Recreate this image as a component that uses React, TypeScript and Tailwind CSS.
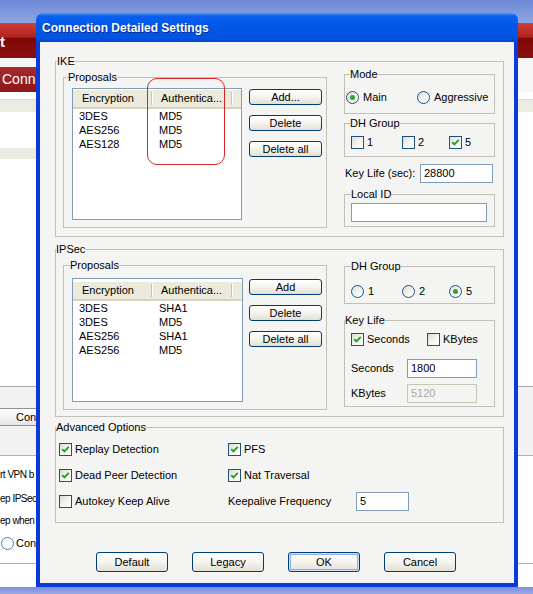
import React from 'react';

type Proposal = [string, string];

const ikeProposals: Proposal[] = [
  ['3DES', 'MD5'],
  ['AES256', 'MD5'],
  ['AES128', 'MD5'],
];

const ipsecProposals: Proposal[] = [
  ['3DES', 'SHA1'],
  ['3DES', 'MD5'],
  ['AES256', 'SHA1'],
  ['AES256', 'MD5'],
];

const CheckBox = ({ checked = false }: { checked?: boolean }) => (
  <span className="flex h-[13px] w-[13px] shrink-0 items-center justify-center border border-[#1c5180] bg-linear-to-br from-[#dcdcd5] via-[#f3f3ef] to-white">
    {checked && (
      <svg width="9" height="9" viewBox="0 0 9 9">
        <path d="M1.2 4.2 3.4 6.5 7.8 1.9" fill="none" stroke="#21a121" strokeWidth="1.9" />
      </svg>
    )}
  </span>
);

const Radio = ({ selected = false }: { selected?: boolean }) => (
  <span className="flex h-[13px] w-[13px] shrink-0 items-center justify-center rounded-full border border-[#1c5180] bg-linear-to-br from-[#dcdcd5] via-[#f3f3ef] to-white">
    {selected && <span className="h-[5px] w-[5px] rounded-full bg-[#2aa82a]" />}
  </span>
);

interface GroupBoxProps {
  label: string;
  labelClass: string;
  className: string;
  children?: React.ReactNode;
}

// XP style group box: the caption sits on the top border line
const GroupBox = ({ label, labelClass, className, children }: GroupBoxProps) => (
  <fieldset className={`border border-[#c0c0b8] ${className}`}>
    <legend className={`text-[11px] leading-[13px] ${labelClass}`}>{label}</legend>
    {children}
  </fieldset>
);

const HeaderDivider = () => (
  <span className="h-[13px] w-[2px] shrink-0 border-x border-l-[#c7c5b2] border-r-white" />
);

const ListView = ({ rows, className, pad }: { rows: Proposal[]; className: string; pad: string }) => (
  <div className={`flex flex-col border border-[#7f9db9] bg-white ${pad} ${className}`}>
    <div className="flex h-[19px] shrink-0 items-center border-b-2 border-[#d6d3c4] bg-[#ebeadb]">
      <span className="w-[78px] pl-[9px]">Encryption</span>
      <HeaderDivider />
      <span className="w-[78px] pl-[8px]">Authentica...</span>
      <HeaderDivider />
    </div>
    {rows.map(([enc, auth], i) => (
      <div key={i} className="flex h-[14px] items-center">
        <span className="w-[80px] pl-[6px]">{enc}</span>
        <span className="pl-[6px]">{auth}</span>
      </div>
    ))}
  </div>
);

interface XpButtonProps {
  label: string;
  className: string;
  isDefault?: boolean;
}

const XpButton = ({ label, className, isDefault = false }: XpButtonProps) => (
  <div
    className={`flex items-center justify-center rounded-[3px] border border-[#003c74] bg-linear-to-b from-white via-[#f5f4ee] to-[#e2dfd5] text-[11px] leading-none ${
      isDefault ? 'shadow-[inset_0_0_0_1px_#cfe0fb,inset_0_0_0_2px_#8aaef0]' : ''
    } ${className}`}
  >
    {label}
  </div>
);

const TextBox = ({ value = '', className, disabled = false }: { value?: string; className: string; disabled?: boolean }) => (
  <div
    className={`flex h-[19px] shrink-0 items-center border pl-[3px] text-[11px] ${
      disabled ? 'border-[#c9c7ba] bg-[#f4f4f2] text-[#aca899]' : 'border-[#7f9db9] bg-white'
    } ${className}`}
  >
    {value}
  </div>
);

const Option = ({ children, className = '' }: { children: React.ReactNode; className?: string }) => (
  <span className={`flex items-center gap-[3px] ${className}`}>{children}</span>
);

// the main client window sitting behind the dialog; only its edges show
const BackgroundApp = () => (
  <div className="flex h-full flex-col text-[11px]">
    <div className="h-[23px] bg-linear-to-b from-[#6d89d6] to-[#8ea5e2]" />
    <div className="flex h-[35px] items-center bg-[linear-gradient(to_bottom,#cf4038_0%,#b1231e_40%,#7e0808_43%,#8a0f0f_100%)] text-[15px] font-bold leading-none text-white">
      <span className="pt-[2px]">t</span>
    </div>
    <div className="h-[9px] bg-[#f6f6f6]" />
    <div className="flex h-[25px] bg-[#f6f6f6]">
      <div className="flex h-full w-[36px] items-center whitespace-nowrap bg-linear-to-b from-[#a92a2a] to-[#8c1515] pl-[2px] text-[14px] text-white">
        Conn
      </div>
    </div>
    <div className="h-[8px] border-b border-[#d8d8d8] bg-white" />
    <div className="h-[12px] bg-[#ecebe2]" />
    <div className="h-[36px] bg-white" />
    <div className="h-[11px] w-[36px] bg-[#ecebe2]" />
    <div className="h-[227px] bg-white" />
    <div className="h-px bg-[#a8a8a8]" />
    <div className="h-[68px] bg-[#f2f2f2] pt-[21px]">
      <div className="flex h-[18px] w-[36px] items-center whitespace-nowrap border-y border-[#8e8f8f] bg-linear-to-b from-white to-[#e6e6e6] pl-[16px] text-[11px]">
        Con
      </div>
    </div>
    <div className="h-px bg-[#b4b4b4]" />
    <div className="flex h-[107px] w-[36px] flex-col whitespace-nowrap bg-white pt-[12px] text-[10px] tracking-[-0.5px]">
      <span className="h-[14px] leading-[14px]">rt VPN b</span>
      <span className="mt-[10px] h-[14px] leading-[14px]">ep IPSec</span>
      <span className="mt-[8px] h-[14px] leading-[14px]">ep when</span>
      <span className="mt-[8px] flex h-[14px] items-center gap-[2px] pl-px text-[11px] tracking-normal">
        <span className="h-[13px] w-[13px] shrink-0 rounded-full border border-[#5a7da8] bg-white" />
        Con
      </span>
    </div>
    <div className="h-px bg-[#b4b4b4]" />
    <div className="h-[23px] bg-white" />
    <div className="h-[7px] bg-linear-to-b from-[#7d8fdc] to-[#99a8e6]" />
  </div>
);

export default function App() {
  return (
    <div className="relative h-[594px] w-[533px] overflow-hidden bg-white font-['Liberation_Sans',Arial,sans-serif] text-black">
      <BackgroundApp />

      {/* Dialog window */}
      <div className="absolute left-[36px] top-[13px] flex w-[482px] flex-col">
        <div className="flex h-[29px] items-center rounded-t-[7px] bg-[linear-gradient(to_bottom,#4a98ff_0%,#0a61ef_10%,#0057e8_45%,#0254e2_85%,#0249cf_100%)] pl-[6px] pt-px">
          <span className="text-[12px] font-bold text-white [text-shadow:1px_1px_0_#0b2a8a]">
            Connection Detailed Settings
          </span>
        </div>

        <div className="h-[545px] border-x-4 border-b-4 border-[#0a3ad8]">
          <div className="h-full bg-[#f4f4f2] pl-[15px] pt-[13px] text-[11px]">
            {/* IKE */}
            <GroupBox label="IKE" labelClass="ml-[1px]" className="h-[182px] w-[449px]">
              <div className="flex items-start">
                <GroupBox label="Proposals" labelClass="ml-[4px]" className="ml-[7px] mt-[3px] h-[157px] w-[264px]">
                  <div className="flex items-start">
                    <ListView rows={ikeProposals} pad="pt-px" className="ml-[8px] mt-[4px] h-[132px] w-[170px]" />
                    <div className="ml-[7px] mt-[5px] flex w-[73px] flex-col gap-[10px]">
                      <XpButton label="Add..." className="h-[16px]" />
                      <XpButton label="Delete" className="h-[16px]" />
                      <XpButton label="Delete all" className="h-[16px]" />
                    </div>
                  </div>
                </GroupBox>

                <div className="ml-[17px] flex w-[151px] flex-col">
                  <GroupBox label="Mode" labelClass="ml-[5px]" className="h-[46px] w-[151px]">
                    <div className="ml-[1px] mt-[8px] flex items-center">
                      <span className="flex w-[71px] items-center gap-[4px]">
                        <Radio selected />
                        Main
                      </span>
                      <span className="flex items-center gap-[4px]">
                        <Radio />
                        Aggressive
                      </span>
                    </div>
                  </GroupBox>

                  <GroupBox label="DH Group" labelClass="ml-[5px]" className="mt-[3px] h-[40px] w-[151px]">
                    <div className="ml-[6px] mt-[4px] flex items-center">
                      <Option className="w-[51px]">
                        <CheckBox />1
                      </Option>
                      <Option className="w-[47px]">
                        <CheckBox />2
                      </Option>
                      <Option>
                        <CheckBox checked />5
                      </Option>
                    </div>
                  </GroupBox>

                  <div className="mt-[7px] flex h-[19px] items-center">
                    <span className="pl-[1px]">Key Life (sec):</span>
                    <TextBox value="28800" className="ml-auto mr-[2px] w-[73px]" />
                  </div>

                  <GroupBox label="Local ID" labelClass="ml-[6px]" className="mt-[5px] h-[39px] w-[151px]">
                    <TextBox className="ml-[6px] mt-[2px] w-[136px]" />
                  </GroupBox>
                </div>
              </div>
            </GroupBox>

            {/* IPSec */}
            <GroupBox label="IPSec" labelClass="ml-0" className="mt-[6px] h-[174px] w-[449px]">
              <div className="flex items-start">
                <GroupBox label="Proposals" labelClass="ml-[6px]" className="ml-[7px] mt-[3px] h-[151px] w-[264px]">
                  <div className="flex items-start">
                    <ListView rows={ipsecProposals} pad="pt-[3px]" className="ml-[8px] mt-[6px] h-[124px] w-[171px]" />
                    <div className="ml-[6px] mt-[7px] flex w-[73px] flex-col gap-[10px]">
                      <XpButton label="Add" className="h-[16px]" />
                      <XpButton label="Delete" className="h-[16px]" />
                      <XpButton label="Delete all" className="h-[16px]" />
                    </div>
                  </div>
                </GroupBox>

                <div className="ml-[17px] flex w-[151px] flex-col">
                  <GroupBox label="DH Group" labelClass="ml-[6px]" className="mt-[4px] h-[44px] w-[151px]">
                    <div className="ml-[6px] mt-[10px] flex items-center">
                      <span className="flex w-[51px] items-center gap-[4px]">
                        <Radio />1
                      </span>
                      <span className="flex w-[47px] items-center gap-[4px]">
                        <Radio />2
                      </span>
                      <span className="flex items-center gap-[4px]">
                        <Radio selected />5
                      </span>
                    </div>
                  </GroupBox>

                  <GroupBox label="Key Life" labelClass="ml-0" className="mt-[10px] h-[93px] w-[151px]">
                    <div className="ml-[6px] mt-[4px] flex items-center">
                      <Option className="w-[76px]">
                        <CheckBox checked />
                        Seconds
                      </Option>
                      <Option>
                        <CheckBox />
                        KBytes
                      </Option>
                    </div>
                    <div className="ml-[6px] mt-[11px] flex items-center">
                      <span className="w-[56px]">Seconds</span>
                      <TextBox value="1800" className="w-[70px]" />
                    </div>
                    <div className="ml-[6px] mt-[6px] flex items-center">
                      <span className="w-[56px]">KBytes</span>
                      <TextBox value="5120" disabled className="w-[70px]" />
                    </div>
                  </GroupBox>
                </div>
              </div>
            </GroupBox>

            {/* Advanced Options */}
            <GroupBox label="Advanced Options" labelClass="ml-0" className="mt-[4px] h-[102px] w-[449px]">
              <div className="ml-[3px] mt-[9px] grid grid-cols-[169px_auto] grid-rows-[13px_13px_13px] items-center gap-y-[13px]">
                <Option>
                  <CheckBox checked />
                  Replay Detection
                </Option>
                <Option>
                  <CheckBox checked />
                  PFS
                </Option>
                <Option>
                  <CheckBox checked />
                  Dead Peer Detection
                </Option>
                <Option>
                  <CheckBox checked />
                  Nat Traversal
                </Option>
                <Option>
                  <CheckBox />
                  Autokey Keep Alive
                </Option>
                <span className="flex items-center">
                  <span className="w-[128px]">Keepalive Frequency</span>
                  <TextBox value="5" className="w-[53px]" />
                </span>
              </div>
            </GroupBox>

            <div className="ml-[41px] mt-[29px] flex gap-[24px]">
              <XpButton label="Default" className="h-[20px] w-[72px]" />
              <XpButton label="Legacy" className="h-[20px] w-[72px]" />
              <XpButton label="OK" isDefault className="h-[20px] w-[72px]" />
              <XpButton label="Cancel" className="h-[20px] w-[72px]" />
            </div>
          </div>
        </div>
      </div>

      {/* red highlight drawn around the authentication column */}
      <div className="absolute left-[147px] top-[78px] h-[87px] w-[78px] rounded-[10px] border border-[#d9262b]" />
    </div>
  );
}
